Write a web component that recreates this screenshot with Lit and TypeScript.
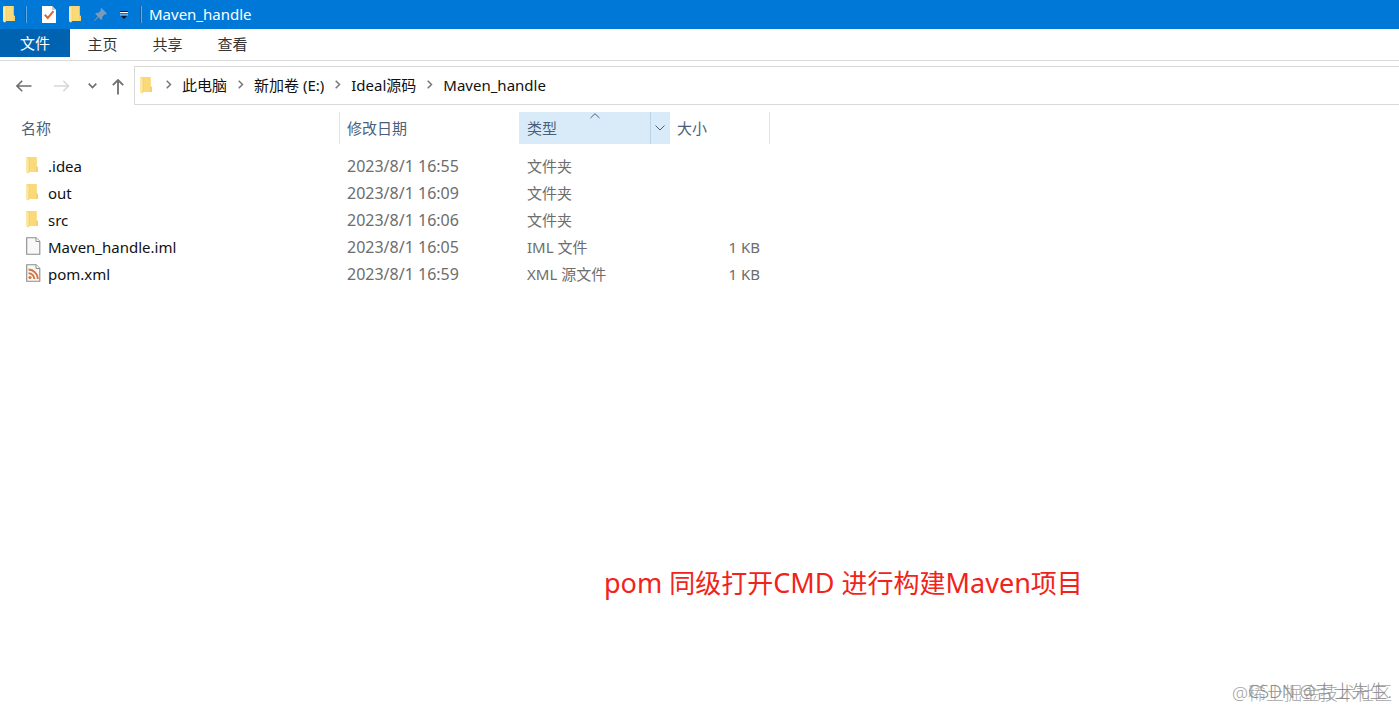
import { LitElement, html, css, svg } from "lit";
import { customElement, property } from "lit/decorators.js";

interface Entry {
  name: string;
  modified: string;
  type: string;
  size: string;
  icon: "folder" | "file" | "xml";
}

const ENTRIES: Entry[] = [
  { name: ".idea", modified: "2023/8/1 16:55", type: "文件夹", size: "", icon: "folder" },
  { name: "out", modified: "2023/8/1 16:09", type: "文件夹", size: "", icon: "folder" },
  { name: "src", modified: "2023/8/1 16:06", type: "文件夹", size: "", icon: "folder" },
  { name: "Maven_handle.iml", modified: "2023/8/1 16:05", type: "IML 文件", size: "1 KB", icon: "file" },
  { name: "pom.xml", modified: "2023/8/1 16:59", type: "XML 源文件", size: "1 KB", icon: "xml" },
];

const ICONS = {
  folder: svg`
    <path d="M1 0H10.8V9.5L12 10V15H3L2 16.5 0 15V.8Z" fill="#f9d978"/>
    <path d="M0 .8 2.8 1.8V13.5L2 16.5 0 15Z" fill="#fbe7a6"/>
    <path d="M3.2 1V13.5L2.4 16" fill="none" stroke="#f3cf6c" stroke-width=".8"/>
    <path d="M10 9.5 12 10V15H10Z" fill="#f5cf70"/>`,
  file: svg`
    <path d="M.7.7H10L13.8 4.5V17.3H.7Z" fill="#f8f8f8" stroke="#8b8b8b" stroke-width="1.1"/>
    <path d="M10 .7V4.5H13.8" fill="#fff" stroke="#8b8b8b"/>`,
  xml: svg`
    <path d="M.7.7H10L13.8 4.5V17.3H.7Z" fill="#f8f8f8" stroke="#8b8b8b" stroke-width="1.1"/>
    <path d="M10 .7V4.5H13.8" fill="#fff" stroke="#8b8b8b"/>
    <g fill="none" stroke="#d9763e" stroke-width="2">
      <path d="M2.5 5.6A9.4 9.4 0 0 1 11.8 15"/>
      <path d="M2.5 9.2A5.8 5.8 0 0 1 8.3 15"/>
    </g>
    <circle cx="4" cy="13.5" r="1.6" fill="#d9763e"/>`,
  check: svg`
    <path d="M0 0H10L14 4V17H0Z" fill="#fff"/>
    <path d="M10 0V4H14Z" fill="#c9c9d2"/>
    <path d="M2.8 8.8 5.8 12 11.5 5.2" fill="none" stroke="#e0652c" stroke-width="2"/>`,
  pin: svg`
    <path d="M7.5 0 13 5.5 11.8 6.6 10.8 6.3 8.3 8.8 8.2 11.3 7.2 12 4.5 9.2.6 13 0 12.5 3.8 8.5 1.2 5.8 2 4.9 4.5 4.8 7 2.3 6.5 1Z" fill="#7d99b3"/>`,
  menu: svg`
    <path d="M0 .5H8" stroke="#0b1526"/>
    <path d="M0 1.5H8" stroke="#fff"/>
    <path d="M0 4H8L4 8Z" fill="#0b1526"/>
    <path d="M0 4H8" stroke="#cfe3f5"/>`,
  back: svg`<path d="M15.5 6H1M6.2.8 1 6 6.2 11.2" fill="none" stroke="currentColor" stroke-width="1.6"/>`,
  forward: svg`<path d="M0 6H14.5M9.3.8 14.5 6 9.3 11.2" fill="none" stroke="currentColor" stroke-width="1.6"/>`,
  up: svg`<path d="M6 15.5V1M.8 6.2 6 1 11.2 6.2" fill="none" stroke="currentColor" stroke-width="1.8"/>`,
  recent: svg`<path d="M.7.7 4.5 4.5 8.3.7" fill="none" stroke="currentColor" stroke-width="1.7"/>`,
  crumb: svg`<path d="M.7.7 4.5 4.5.7 8.3" fill="none" stroke="currentColor" stroke-width="1.5"/>`,
  sorted: svg`<path d="M.5 5 5 .7 9.5 5" fill="none" stroke="currentColor"/>`,
  filter: svg`<path d="M.5.5 5 5 9.5.5" fill="none" stroke="currentColor"/>`,
};

const SIZES: Record<keyof typeof ICONS, [number, number]> = {
  folder: [12, 17],
  file: [15, 18],
  xml: [15, 18],
  check: [14, 17],
  pin: [13, 13],
  menu: [8, 8],
  back: [16, 12],
  forward: [16, 12],
  up: [12, 16],
  recent: [9, 6],
  crumb: [6, 9],
  sorted: [10, 6],
  filter: [10, 6],
};

@customElement("ui-icon")
class UiIcon extends LitElement {
  @property() name: keyof typeof ICONS = "folder";

  static styles = css`
    :host { display: inline-flex; flex: none; }
    svg { display: block; }
  `;

  render() {
    const [w, h] = SIZES[this.name];
    return html`<svg width=${w} height=${h} viewBox="0 0 ${w} ${h}" aria-hidden="true">${ICONS[this.name]}</svg>`;
  }
}

@customElement("app-root")
class AppRoot extends LitElement {
  static styles = css`
    :host {
      display: flex;
      flex-direction: column;
      position: relative;
      min-height: 100vh;
      box-sizing: border-box;
      overflow: hidden;
      background: #fff;
      color: #111;
      font-family: "Noto Sans", "Noto Sans CJK SC", sans-serif;
      font-size: 15px;
      line-height: 20px;
    }
    button {
      display: inline-flex;
      align-items: center;
      justify-content: center;
      padding: 0;
      border: 0;
      background: none;
      color: inherit;
      font: inherit;
    }
    a { color: inherit; text-decoration: none; }
    .title-bar {
      display: flex;
      align-items: center;
      height: 29px;
      padding-left: 3px;
      background: #0078d7;
      color: #fff;
    }
    .rule { width: 1px; height: 17px; border-left: 1px solid #1c5f9c; background: #5fa9e3; }
    .quick { display: flex; align-items: center; gap: 13px; padding: 0 12px 0 15px; }
    .rule.first { margin-left: 10px; }
    .title { margin: 0 0 0 7px; padding-bottom: 2px; font-size: 15px; font-weight: 400; }
    .tabs { display: flex; height: 31px; border-bottom: 1px solid #dadbdc; }
    .tab { width: 65px; height: 29px; color: #333; }
    .tab.file { width: 70px; height: 28px; background: #0063b1; color: #fff; }
    .nav { display: flex; padding-top: 5px; }
    .arrows {
      display: flex;
      align-items: center;
      box-sizing: border-box;
      width: 134px;
      padding-left: 16px;
      color: #6f6f6f;
    }
    .forward { margin-left: 22px; color: #d8d8d8; }
    .recent { margin-left: 18px; }
    .up { margin-left: 15px; padding-top: 2px; }
    .address {
      display: flex;
      flex: 1;
      align-items: center;
      height: 37px;
      padding-left: 5px;
      border: 1px solid #d9d9d9;
      border-right: 0;
    }
    .crumbs { display: flex; margin: 0; padding: 0; list-style: none; }
    .crumbs li { display: flex; align-items: center; }
    .crumbs a { padding-bottom: 2px; }
    .crumbs ui-icon { width: 6px; padding: 0 10px 2px 11px; color: #777; }
    .crumbs li:first-child ui-icon { padding-left: 14px; }
    .listing { flex: 1; padding-top: 7px; }
    table { border-spacing: 0; table-layout: fixed; width: 770px; }
    th, td { padding: 0 0 0 8px; text-align: left; font-weight: 400; white-space: nowrap; }
    th {
      position: relative;
      box-sizing: border-box;
      height: 32px;
      border-right: 1px solid #e3e3e3;
      color: #4c607a;
    }
    th:first-child { padding-left: 21px; }
    th.modified { border-right: 0; padding-left: 7px; }
    th.type { background: #d9ebf9; border-right: 0; }
    th.size { padding-left: 7px; }
    .name-col { width: 340px; }
    .modified-col { width: 179px; }
    .type-col { width: 151px; }
    .sorted { position: absolute; top: 1px; left: 0; right: 0; justify-content: center; }
    .filter {
      position: absolute;
      top: 0;
      right: 0;
      bottom: 0;
      width: 20px;
      padding-right: 2px;
      border-left: 1px solid #b9d3e8;
    }
    tbody::before { content: ""; display: block; height: 8px; }
    td { height: 27px; color: #6d6d6d; }
    td.modified { padding-left: 7px; font-size: 16px; }
    td.size { padding-right: 10px; text-align: right; }
    td:first-child { padding-left: 26px; }
    .entry { display: flex; align-items: center; color: #111; }
    .entry ui-icon { width: 22px; padding-bottom: 1px; }
    .note {
      position: absolute;
      left: 604px;
      top: 565px;
      margin: 0;
      color: #f0241a;
      font-size: 26px;
      line-height: 36px;
      white-space: nowrap;
    }
    .latin { font-size: 27px; }
    .mark {
      position: absolute;
      right: 7px;
      bottom: 4px;
      color: #a6a6a6;
      font-size: 18px;
      font-weight: 300;
      line-height: 24px;
      white-space: nowrap;
    }
    .mark.author { bottom: 6px; color: #8c8c8c; }
  `;

  render() {
    return html`
      <header class="title-bar">
        <ui-icon name="folder"></ui-icon>
        <span class="rule first"></span>
        <div class="quick">
          <button aria-label="属性"><ui-icon name="check"></ui-icon></button>
          <button aria-label="新建文件夹"><ui-icon name="folder"></ui-icon></button>
          <button aria-label="固定"><ui-icon name="pin"></ui-icon></button>
          <button aria-label="自定义快速访问工具栏"><ui-icon name="menu"></ui-icon></button>
        </div>
        <span class="rule"></span>
        <h1 class="title">Maven_handle</h1>
      </header>
      <nav class="tabs">
        <button class="tab file">文件</button>
        ${["主页", "共享", "查看"].map((t) => html`<button class="tab">${t}</button>`)}
      </nav>
      <div class="nav">
        <div class="arrows">
          <button aria-label="后退"><ui-icon name="back"></ui-icon></button>
          <button class="forward" aria-label="前进" disabled><ui-icon name="forward"></ui-icon></button>
          <button class="recent" aria-label="最近浏览的位置"><ui-icon name="recent"></ui-icon></button>
          <button class="up" aria-label="上移"><ui-icon name="up"></ui-icon></button>
        </div>
        <div class="address">
          <ui-icon name="folder"></ui-icon>
          <ol class="crumbs">
            ${["此电脑", "新加卷 (E:)", "Ideal源码", "Maven_handle"].map(
              (c) => html`<li><ui-icon name="crumb"></ui-icon><a href="#">${c}</a></li>`
            )}
          </ol>
        </div>
      </div>
      <main class="listing">
        <table>
          <colgroup><col class="name-col"><col class="modified-col"><col class="type-col"><col></colgroup>
          <thead>
            <tr>
              <th>名称</th>
              <th class="modified">修改日期</th>
              <th class="type" aria-sort="ascending">
                类型<ui-icon class="sorted" name="sorted"></ui-icon>
                <button class="filter" aria-label="筛选"><ui-icon name="filter"></ui-icon></button>
              </th>
              <th class="size">大小</th>
            </tr>
          </thead>
          <tbody>
            ${ENTRIES.map(
              (e) => html`<tr>
                <td><a class="entry" href="#"><ui-icon name=${e.icon}></ui-icon>${e.name}</a></td>
                <td class="modified">${e.modified}</td>
                <td>${e.type}</td>
                <td class="size">${e.size}</td>
              </tr>`
            )}
          </tbody>
        </table>
      </main>
      <p class="note"><span class="latin">pom </span>同级打开<span class="latin">CMD </span>进行构建<span class="latin">Maven</span>项目</p>
      <span class="mark">@稀土掘金技术社区</span>
      <span class="mark author">CSDN @吉士先生.</span>
    `;
  }
}
